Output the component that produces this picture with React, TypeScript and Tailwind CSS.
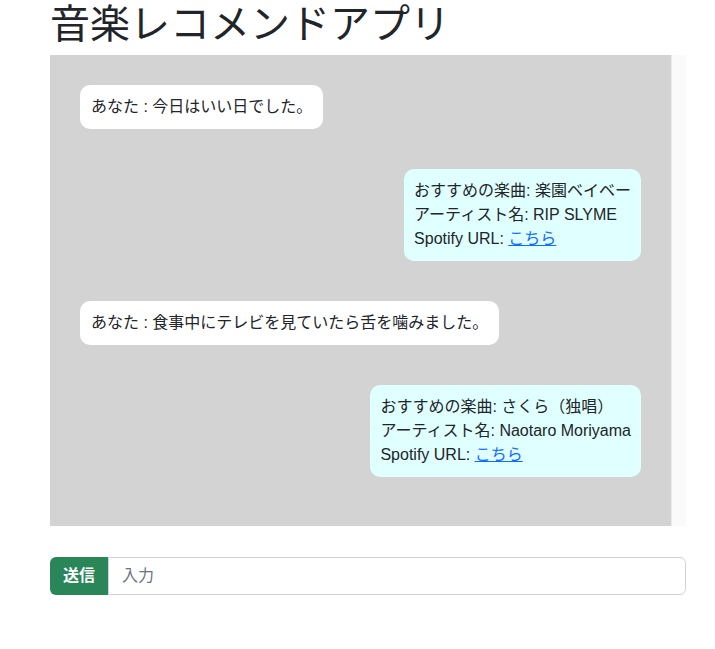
const messages = [
  { from: 'user', text: 'あなた : 今日はいい日でした。' },
  { from: 'bot', song: '楽園ベイベー', artist: 'RIP SLYME' },
  { from: 'user', text: 'あなた : 食事中にテレビを見ていたら舌を噛みました。' },
  { from: 'bot', song: 'さくら（独唱）', artist: 'Naotaro Moriyama' },
];

export default function App() {
  return (
    <div className="min-h-screen bg-white text-[#212529] font-['Liberation_Sans','Noto_Sans_CJK_JP',sans-serif]">
      <div className="pl-[50px] pr-[29px]">
        <h1 className="text-[40px] leading-[48px] font-normal mb-[7px]">音楽レコメンドアプリ</h1>

        {/* Chat Area */}
        <div className="h-[471px] bg-[#d3d3d3] flex text-base leading-6">
          <div className="flex-1 flex flex-col gap-10 p-[30px]">
            {messages.map((m, i) =>
              m.from === 'user' ? (
                <div key={i} className="self-start bg-white rounded-[10px] px-[11px] py-[10px]">
                  {m.text}
                </div>
              ) : (
                <div key={i} className="self-end bg-[#e0ffff] rounded-[10px] px-[10px] py-[10px]">
                  <div>おすすめの楽曲: {m.song}</div>
                  <div>アーティスト名: {m.artist}</div>
                  <div>
                    Spotify URL:{' '}
                    <a href="#" className="text-[#0d6efd] underline">こちら</a>
                  </div>
                </div>
              )
            )}
          </div>
          {/* Scrollbar track */}
          <div className="w-[15px] bg-[#fafafa] border-l border-[#ececec]" />
        </div>

        {/* Input */}
        <div className="flex mt-[31px] h-[38px]">
          <button className="bg-[#2a8559] text-white px-[13px] rounded-l-[6px] text-base font-semibold">送信</button>
          <input
            className="flex-1 border border-[#ced4da] rounded-r-[6px] px-[13px] text-base outline-none placeholder:text-[#6c757d]"
            placeholder="入力"
          />
        </div>
      </div>
    </div>
  );
}
